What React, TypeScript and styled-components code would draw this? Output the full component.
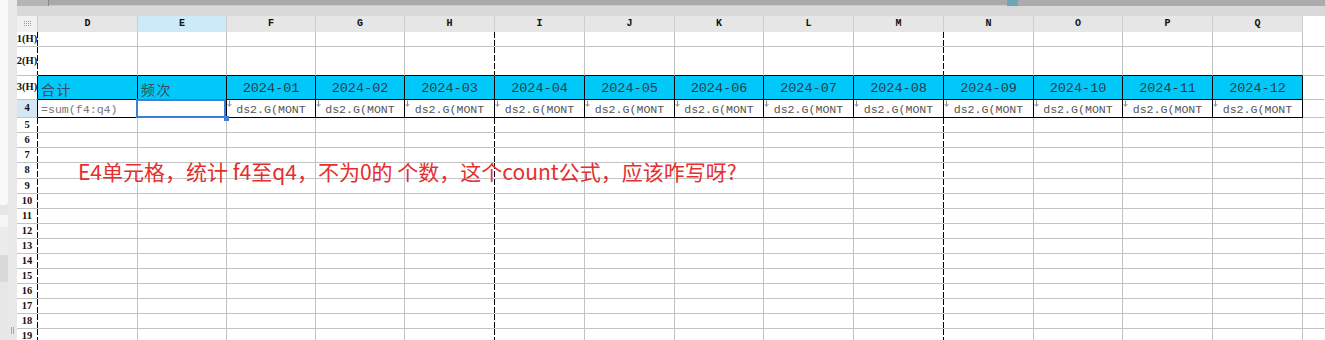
import React from 'react';
import styled, { createGlobalStyle, css } from 'styled-components';

const Global = createGlobalStyle`
  html, body { margin: 0; padding: 0; background: #fff; }
  body {
    width: 1325px;
    height: 340px;
    overflow: hidden;
    font-family: "Noto Sans", "Noto Sans CJK SC", sans-serif;
  }
`;

type Edge = 'grid' | 'black' | 'dash' | 'none' | 'head';
const edgeColor: Record<Edge, string> = {
  grid: '#c3c3c3',
  black: '#000',
  head: '#cdcdcd',
  none: 'transparent',
  dash: 'transparent',
};

const Root = styled.div`
  position: relative;
  display: flex;
  width: 1325px;
  height: 340px;
  overflow: hidden;
`;

const LeftPanel = styled.div`
  display: flex;
  width: 17px;
  flex: none;
`;

const Rail = styled.div`
  display: flex;
  flex-direction: column;
  width: 8px;
  background: #e7e7e7;
`;

const RailPart = styled.div<{ $h: number; $bg: string; $round?: boolean }>`
  height: ${p => p.$h}px;
  flex: none;
  background: ${p => p.$bg};
  border-radius: ${p => (p.$round ? '0 0 4px 0' : '0')};
`;

const Gutter = styled.div`
  display: flex;
  flex-direction: column;
  justify-content: flex-end;
  align-items: center;
  width: 9px;
  background: #e8e8e8;
  padding-bottom: 6px;
  box-sizing: border-box;
`;

const Grip = styled.div`
  width: 3px;
  height: 7px;
  border-left: 1px solid #a8a8a8;
  border-right: 1px solid #a8a8a8;
  box-sizing: border-box;
`;

const Sheet = styled.div`
  display: flex;
  flex-direction: column;
  flex: 1;
  min-width: 0;
`;

const ScrollStrip = styled.div`
  display: flex;
  height: 6px;
  flex: none;
  background: #ababab;
`;

const StripPart = styled.div<{ $w?: number; $bg: string; $line?: boolean }>`
  ${p => (p.$w ? `width: ${p.$w}px; flex: none;` : 'flex: 1;')}
  background: ${p => p.$bg};
  box-sizing: border-box;
  border-bottom: ${p => (p.$line ? '1px solid #cbcbcb' : 'none')};
`;

const Band = styled.div`
  height: 10px;
  flex: none;
  background: #d9d9d9;
`;

const Grid = styled.div`
  display: grid;
  grid-template-columns:
    21px 100px 89px 89px 89px 90px 90px 90px 89px 90px 90px 90px 89px 90px 90px 1fr;
  grid-template-rows:
    16px 15px 29px 24px 18px 15px 15px 15px 16px repeat(11, 15px);
`;

const Cell = styled.div<{ $r: Edge; $b: Edge; $bg?: string; $left?: boolean; $pt?: number }>`
  position: relative;
  box-sizing: border-box;
  min-width: 0;
  white-space: nowrap;
  display: flex;
  align-items: center;
  justify-content: ${p => (p.$left ? 'flex-start' : 'center')};
  padding-left: ${p => (p.$left ? '3px' : '0')};
  padding-top: ${p => p.$pt ?? 0}px;
  background-color: ${p => p.$bg ?? '#fff'};
  border-right: 1px solid ${p => edgeColor[p.$r]};
  border-bottom: 1px solid ${p => edgeColor[p.$b]};
  ${p =>
    p.$r === 'dash' &&
    css`
      background-image: linear-gradient(to bottom, #000 0 6px, transparent 6px 8px);
      background-size: 1px 8px;
      background-repeat: repeat-y;
      background-position: right top;
      background-origin: border-box;
    `}
`;

const ColLetter = styled.span`
  font-family: "Liberation Mono", monospace;
  font-weight: bold;
  font-size: 10px;
  color: #111;
  line-height: 1;
`;

const RowNum = styled.span`
  font-family: "Liberation Serif", serif;
  font-weight: bold;
  font-size: 10.5px;
  color: #111;
  line-height: 1;
`;

const TitleText = styled.span`
  font-family: "Noto Sans CJK SC", sans-serif;
  font-size: 14px;
  color: #3a4b5b;
  line-height: 1;
  letter-spacing: 1.5px;
`;

const MonthText = styled.span`
  font-family: "Liberation Mono", monospace;
  font-size: 13.5px;
  color: #2a3a48;
  line-height: 1;
`;

const FormulaText = styled.span<{ $muted?: boolean }>`
  font-family: "Liberation Mono", monospace;
  font-size: 11.6px;
  color: ${p => (p.$muted ? '#777' : '#555')};
  line-height: 1;
`;

const Mark = styled.svg`
  position: absolute;
  left: 0;
  top: 0;
`;

const Selection = styled.div`
  position: absolute;
  left: -2px;
  top: -1px;
  right: 0;
  bottom: -1px;
  border: 2px solid #3d7fd6;
  z-index: 2;
  pointer-events: none;
`;

const Handle = styled.div`
  position: absolute;
  right: -5px;
  bottom: -5px;
  width: 5px;
  height: 5px;
  background: #3d7fd6;
`;

const Note = styled.div`
  position: absolute;
  left: 78px;
  top: 161px;
  font-family: "Noto Sans CJK SC", "Noto Sans", sans-serif;
  font-size: 21px;
  line-height: 1;
  color: #e62e2e;
  white-space: nowrap;
  z-index: 3;
`;

const DownMark = () => (
  <Mark width="5" height="7" viewBox="0 0 5 7">
    <path d="M2.5 0.5V6.2M0.6 4.1L2.5 6.3L4.4 4.1" stroke="#8c8c8c" strokeWidth="1" fill="none" />
  </Mark>
);

const CornerIcon = () => (
  <svg width="9" height="6" viewBox="0 0 9 6">
    {[0, 1, 2].map(r =>
      [0, 1, 2, 3].map(c => (
        <rect key={`${r}-${c}`} x={c * 2 + 1} y={r * 2} width="1" height="1" fill="#9c9c9c" />
      ))
    )}
  </svg>
);

const COLS = ['D', 'E', 'F', 'G', 'H', 'I', 'J', 'K', 'L', 'M', 'N', 'O', 'P', 'Q'];
const BREAK_AFTER = new Set(['H', 'M']);
const MONTHS: Record<string, string> = {
  F: '2024-01', G: '2024-02', H: '2024-03', I: '2024-04', J: '2024-05', K: '2024-06',
  L: '2024-07', M: '2024-08', N: '2024-09', O: '2024-10', P: '2024-11', Q: '2024-12',
};
const ROWS = Array.from({ length: 19 }, (_, i) => i + 1);

function rowLabel(r: number) {
  return r <= 3 ? `${r}(H)` : String(r);
}

export default function App() {
  const cells: React.ReactNode[] = [];

  cells.push(
    <Cell key="corner" $r="head" $b="none" $bg="#f1f1f1">
      <CornerIcon />
    </Cell>
  );
  COLS.forEach(c => {
    cells.push(
      <Cell key={`h-${c}`} $r="head" $b="none" $bg={c === 'E' ? '#cdeaf8' : '#e6e6e6'}>
        <ColLetter>{c}</ColLetter>
      </Cell>
    );
  });
  cells.push(<Cell key="h-rest" $r="none" $b="none" />);

  ROWS.forEach(r => {
    const framed = r === 3 || r === 4;
    cells.push(
      <Cell key={`rh-${r}`} $r={framed ? 'black' : 'dash'} $b="grid" $bg={r === 4 ? '#d4e7f4' : '#fff'}>
        <RowNum>{rowLabel(r)}</RowNum>
      </Cell>
    );
    COLS.forEach(c => {
      const right: Edge = framed ? 'black' : BREAK_AFTER.has(c) ? 'dash' : 'grid';
      const bottom: Edge = r >= 2 && r <= 4 ? 'black' : 'grid';
      let content: React.ReactNode = null;
      let left = false;
      let pt = 0;
      let bg: string | undefined;
      if (r === 3) {
        bg = '#00c8f8';
        pt = 2;
        if (c === 'D' || c === 'E') {
          left = true;
          content = <TitleText>{c === 'D' ? '合计' : '频次'}</TitleText>;
        } else {
          content = <MonthText>{MONTHS[c]}</MonthText>;
        }
      } else if (r === 4) {
        pt = 2;
        if (c === 'D') {
          left = true;
          content = <FormulaText $muted>=sum(f4:q4)</FormulaText>;
        } else if (c === 'E') {
          content = (
            <Selection>
              <Handle />
            </Selection>
          );
        } else {
          content = (
            <>
              <DownMark />
              <FormulaText>ds2.G(MONT</FormulaText>
            </>
          );
        }
      }
      cells.push(
        <Cell key={`${c}${r}`} $r={right} $b={bottom} $bg={bg} $left={left} $pt={pt}>
          {content}
        </Cell>
      );
    });
    cells.push(<Cell key={`rest-${r}`} $r="none" $b="grid" />);
  });

  return (
    <>
      <Global />
      <Root>
        <LeftPanel>
          <Rail>
            <RailPart $h={205} $bg="#f9f9f9" $round />
            <RailPart $h={10} $bg="#e6e6e6" />
            <RailPart $h={12} $bg="#f6f6f6" />
            <RailPart $h={28} $bg="#ececec" />
            <RailPart $h={27} $bg="#d9d9d9" />
          </Rail>
          <Gutter>
            <Grip />
          </Gutter>
        </LeftPanel>
        <Sheet>
          <ScrollStrip>
            <StripPart $w={31} $bg="#b5b5b5" />
            <StripPart $w={1} $bg="#8a8a8a" />
            <StripPart $w={958} $bg="#a9a9a9" $line />
            <StripPart $w={11} $bg="#6fa4b2" />
            <StripPart $bg="#ababab" />
          </ScrollStrip>
          <Band />
          <Grid>{cells}</Grid>
        </Sheet>
        <Note>E4单元格，统计 f4至q4，不为0的 个数，这个count公式，应该咋写呀?</Note>
      </Root>
    </>
  );
}
